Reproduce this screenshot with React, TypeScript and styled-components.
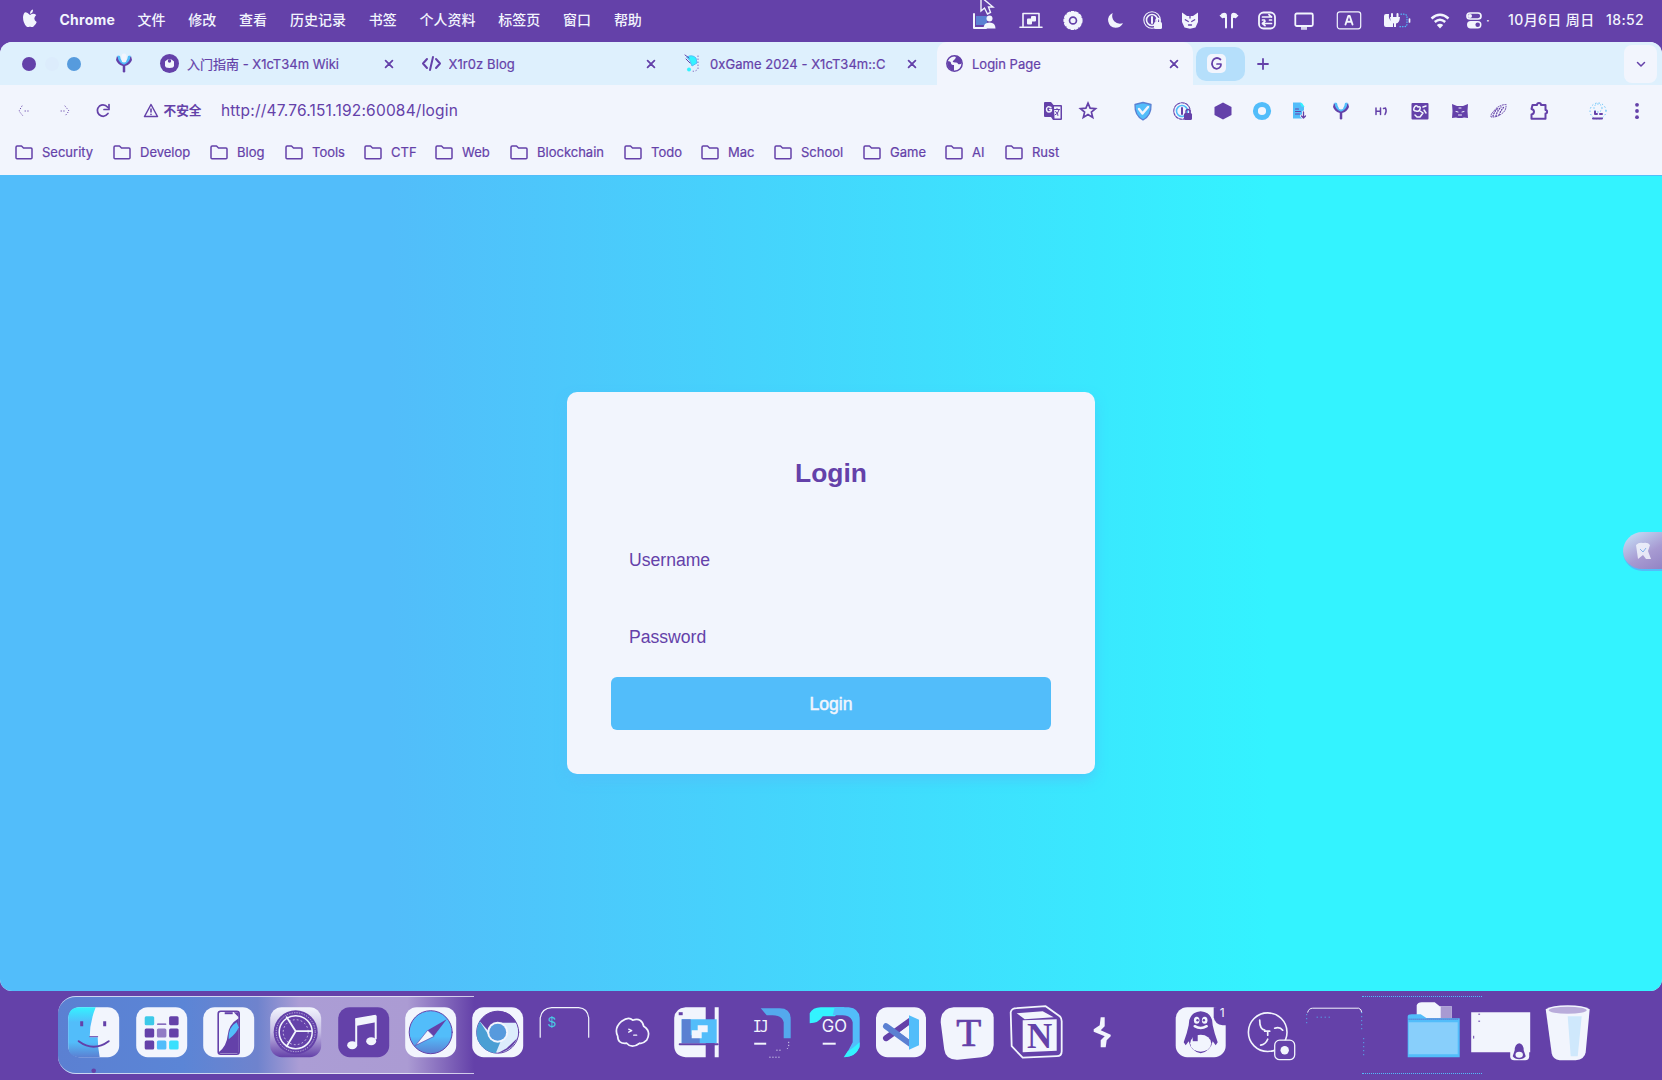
import React from "react";
import styled, { createGlobalStyle } from "styled-components";

const P = "#6441a9";
const W = "#f2f5fd";
const B = "#52bdfa";
const C = "#33f3ff";
const M = "#5b80d2";
const SANS = `Inter, "Noto Sans CJK SC", sans-serif`;

const Global = createGlobalStyle`
  *{box-sizing:border-box}
  body{margin:0;background:${P};overflow:hidden}
  svg{display:block;overflow:visible}
`;
const Desktop = styled.div`
  width:1662px;height:1080px;display:flex;flex-direction:column;background:${P};
  font-family:${SANS};color:${P};
`;
const MenuBar = styled.header`
  height:42px;flex:none;display:flex;align-items:center;color:${W};position:relative;padding-bottom:3px;
`;
const Text = styled.span<{ $w?: number; $size?: number; $ls?: number; $weight?: number; $ml?: number }>`
  width:${(p) => (p.$w ? p.$w + "px" : "auto")};flex:none;white-space:nowrap;
  font-size:${(p) => p.$size ?? 13}px;letter-spacing:${(p) => p.$ls ?? 0}px;
  font-weight:${(p) => p.$weight ?? 400};margin-left:${(p) => p.$ml ?? 0}px;line-height:20px;
`;
const Icon = styled.span<{ $s?: number; $ml?: number }>`
  width:${(p) => p.$s ?? 22}px;height:${(p) => p.$s ?? 22}px;margin-left:${(p) => p.$ml ?? 0}px;
  flex:none;display:block;
`;
const Menus = styled.nav`display:flex;gap:22.8px;margin-left:22px;`;
const Status = styled.div`display:flex;align-items:center;margin-left:auto;width:689px;`;
const Cursor = styled.div`position:absolute;left:979px;top:-3px;`;

const Browser = styled.main`
  height:949px;flex:none;display:flex;flex-direction:column;border-radius:12px;overflow:hidden;background:${W};position:relative;
`;
const TabStrip = styled.div`
  height:43px;flex:none;display:flex;align-items:center;background:#def0fd;padding-left:22px;
`;
const Dots = styled.div`display:flex;align-items:center;gap:8.5px;width:148px;`;
const Dot = styled.i<{ $c: string }>`width:14px;height:14px;border-radius:50%;background:${(p) => p.$c};`;
const Tab = styled.div<{ $w: number; $active?: boolean }>`
  width:${(p) => p.$w}px;height:43px;flex:none;display:flex;align-items:center;
  background:${(p) => (p.$active ? W : "transparent")};border-radius:10px 10px 0 0;
`;
const Title = styled(Text)`overflow:hidden;-webkit-text-stroke:.2px ${P};`;
const GTab = styled.div`
  width:49px;height:34px;border-radius:10px;background:#b5dffb;display:flex;align-items:center;justify-content:center;
  margin-left:3px;padding-right:9px;flex:none;
`;
const GPlate = styled.div`background:${W};border-radius:5px;padding:2px;`;
const Chevron = styled.div`
  width:33px;height:38px;margin-left:auto;margin-right:5px;border-radius:8px;background:${W};
  display:flex;align-items:center;justify-content:center;
`;
const Toolbar = styled.div`height:52px;flex:none;display:flex;align-items:center;padding-left:14px;`;
const ToolIcons = styled.div`display:flex;align-items:center;margin-left:auto;width:620px;`;
const Bookmarks = styled.div`height:38px;flex:none;display:flex;align-items:flex-start;padding:5px 0 0 15px;`;
const Bookmark = styled.div<{ $w: number }>`
  width:${(p) => p.$w}px;flex:none;display:flex;align-items:center;gap:9px;-webkit-text-stroke:.2px ${P};
`;

const Page = styled.section`
  flex:1;background:linear-gradient(90deg,${B} 0,${B} 390px,${C} 1270px);
  border-top:1px solid ${B};display:flex;justify-content:center;position:relative;
`;
const Card = styled.form`
  width:528px;height:382px;margin-top:216px;background:${W};border-radius:10px;padding:64px 44px 44px;
  box-shadow:0 6px 14px -2px rgba(82,189,250,.8);font-family:"Liberation Sans",Arial,sans-serif;
  display:flex;flex-direction:column;
`;
const Heading = styled.h2`margin:0 0 41px;font-size:26.4px;line-height:34px;text-align:center;font-weight:700;`;
const Field = styled.input`
  height:58px;margin:0 0 19.5px;padding:0 18px;border:0;background:transparent;outline:0;
  font:17.6px "Liberation Sans",Arial,sans-serif;color:${P};
  &::placeholder{color:${P};opacity:1}
`;
const Submit = styled.button`
  height:53px;flex:none;margin-top:-9.5px;padding-top:3px;border:0;border-radius:6px;background:${B};color:${W};
  font:17.6px "Liberation Sans",Arial,sans-serif;-webkit-text-stroke:.5px ${W};
`;
const Floating = styled.div`
  position:absolute;right:0;top:356px;width:39px;height:39px;border-radius:20px 0 0 20px;
  background:linear-gradient(150deg,#c9e7fb,#a79ad2 60%,#9384c4);border-bottom:2px solid ${B};
  display:flex;align-items:center;justify-content:center;
`;

const Dock = styled.footer`flex:1;display:flex;padding:5px 0 7px 58px;position:relative;`;
const DockGlass = styled.div`
  position:absolute;left:58px;top:5px;width:416px;height:78px;border-radius:18px 0 0 18px;
  background:linear-gradient(90deg,#5b80d2 0,#5b85d6 30%,#6f83cd 48%,#ab9dd5 58%,#ab9bd3 84%,${P} 100%);
  &::before{content:"";position:absolute;inset:0;border-radius:18px 0 0 18px;border-top:1px solid ${W};border-bottom:1px solid ${W};opacity:.75;}
`;
const DockEdge = styled.div`
  position:absolute;left:1362px;top:5px;width:120px;height:78px;
  border-top:1px dotted ${B};border-bottom:1px dotted ${B};
`;
const Apps = styled.div`display:flex;position:relative;margin-left:2.4px;`;
const App1 = styled.div`width:67.3px;height:77px;flex:none;`;
const Spacer = styled.div<{ $w: number }>`width:${(p) => p.$w}px;flex:none;`;

type SvgProps = { s?: number; v?: string; children: React.ReactNode };
const G = ({ s = 22, v = "0 0 22 22", children }: SvgProps) => (
  <svg width={s} height={s} viewBox={v} fill="none" stroke="currentColor" strokeWidth="1.6" strokeLinecap="round" strokeLinejoin="round">
    {children}
  </svg>
);
const fill = { fill: "currentColor", stroke: "none" };

const Folder = () => (
  <svg width="18" height="15" viewBox="0 0 18 15" fill="none" stroke={P} strokeWidth="1.5" strokeLinejoin="round">
    <path d="M1 12.7V2.2Q1 1 2.2 1H6.5L8.5 3H16Q17 3 17 4V12.7Q17 13.7 16 13.7H2Q1 13.7 1 12.7Z" />
  </svg>
);
const Close = () => <G s={10} v="0 0 10 10"><path d="M1.6 1.6l6.8 6.8M8.4 1.6l-6.8 6.8" strokeWidth="1.8" /></G>;
const Vee = ({ s = 18 }: { s?: number }) => (
  <G s={s} v={s === 18 ? "0 0 18 18" : "-2 -2 22 22"}>
    <path d="M2 1L1 5Q3 10 8 11L9 17L10 11Q15 10 17 5L16 1L12 6L9 9L6 6Z" {...fill} />
    <path d="M2 1L6 6L9 8.500L12 6L16 1L14.500 0.500Q15 5 9 6.500Q3 5 3.500 .5Z" fill={B} stroke="none" />
    <path d="M4 2Q4 6 9 8.500Q14 6 14 2" stroke={B} strokeWidth="2.500" />
    <path d="M9 1V5" stroke={W} strokeWidth="5" />
    <path d="M9 11V16.300" strokeWidth="2.500" />
  </G>
);
const OnePass = ({ ring }: { ring?: string }) => (
  <G>
    <circle cx="10" cy="11" r="8.2" strokeWidth="1.1" strokeDasharray={ring ? "3 1.2" : undefined} />
    <circle cx="10" cy="11" r="5.5" stroke={ring || "currentColor"} strokeWidth="1.6" />
    <path d="M10 8v6" strokeWidth="2" />
    <rect x="12" y="13" width="8" height="7" rx="1.500" {...fill} />
    <path d="M14 13.500v-2a2 2 0 0 1 4 0v2" strokeWidth="1.400" />
  </G>
);

const STATUS: [number, React.ReactNode][] = [
  [0, <G><path d="M1 5v14h12" strokeWidth="2" /><rect x="3" y="7" width="11" height="9" fill={M} stroke="none" /><circle cx="16.5" cy="9.5" r="3" {...fill} /><path d="M10.5 19.5q0-6 6-6t6 6z" {...fill} /></G>],
  [25, <G><path d="M3 17V4.5h16V17M0 18.2h22" /><path d="M7 14.500v-4q0-1 1-1h3V8q0-1 1-1h3q1 0 1 1v3.500q0 1-1 1h-3V14.500q0 1-1 1H8q-1 0-1-1z" {...fill} /></G>],
  [20, <G><circle cx="11" cy="11.5" r="6.6" strokeWidth="4.6" /><circle cx="11" cy="11.5" r="2.600" {...fill} /><circle cx="11" cy="11.5" r="8.8" strokeDasharray="2.4 2" /></G>],
  [20, <G><path d="M8.7 4Q3.5 6.3 4.2 12.3Q5.5 18.7 11.5 18.8Q16.5 18.8 19 14.2Q13.5 15.7 10.2 12.2Q7 8.5 8.7 4Z" {...fill} /></G>],
  [16, <OnePass />],
  [14.5, <G><path d="M3 3.5L8 7h6l5-3.5V13l-2.5 5.5-5.5 1.2-5.5-1.2L3 13z" {...fill} /><path d="M6.3 10.8l3 1.7M15.7 10.8l-3 1.7M11 9V5M9.5 16h3" stroke={P} strokeWidth="1.3" /></G>],
  [17.5, <G><path d="M3 5q5-3 6 1 0 3-3 3-3 0-3-4zM19 5q-5-3-6 1 0 3 3 3 3 0 3-4z" {...fill} /><path d="M8 8v10.5M14 8v10.5" strokeWidth="2" /><path d="M2.5 6.5l2 2M19.500 6.500l-2 2" /></G>],
  [16, <G><rect x="3" y="3.500" width="16" height="16" rx="4.500" strokeWidth="1.800" /><path d="M6.500 8h9M13 5.700L15.500 8M6.500 14.500h9M9 12.200L6.500 14.500 9 16.700M6.500 11h2M13.500 11h2" strokeWidth="1.700" /></G>],
  [15, <G><rect x="2.300" y="4.500" width="17.500" height="12.500" rx="1.500" strokeWidth="1.800" /><path d="M9 18v2.200M11 18v2.200M13 18v2.200" /></G>],
  [23, <G><rect x="-.7" y="2.800" width="23.400" height="17" rx="2.500" strokeWidth="1.200" /><path d="M7.500 15.500L10.300 7h1.400l2.800 8.500M8.500 12.700h5" strokeWidth="1.900" /></G>],
  [25, <G><path d="M-1 7q0-2 2-2h3q-1 6 4 8v5H1q-2 0-2-2z" {...fill} /><path d="M7 5v4M12.500 5v4" strokeWidth="2" /><path d="M5 8h10q-.5 6-4 6.500V18H9v-3.500Q5.500 14 5 8z" {...fill} /><path d="M16 5.200h3q3 0 3 3v6.500q0 3-3 3h-5" stroke={B} strokeDasharray=".5 2" strokeWidth="1.200" /><path d="M24.500 10v3" strokeWidth="1.700" /></G>],
  [22, <G><path d="M2.500 9.500Q11 2 19.500 9.500M5.800 13Q11 8.500 16.200 13" strokeWidth="2.500" strokeLinecap="butt" /><path d="M11 19.500L7.800 16q3.200-2.600 6.400 0z" {...fill} /></G>],
  [12, <G><rect x="4" y="4" width="14" height="6" rx="3" strokeWidth="1.700" /><circle cx="7" cy="7" r="2" {...fill} /><rect x="4" y="12" width="14.500" height="7.500" rx="3.700" {...fill} /><circle cx="14.700" cy="15.700" r="2.300" fill={P} stroke="none" /></G>],
];

const TOOLS: [number, React.ReactNode][] = [
  [0, <G><path d="M2 3q0-1 1-1h6l2.500 3H19q1 0 1 1v13q0 1-1 1h-8l-2-3H3q-1 0-1-1z" {...fill} /><path d="M12 6.500h6.500v12H12.500z" fill={W} stroke="none" /><path d="M9 7.500Q5 5.500 4.500 9q0 3 2.500 3t2.500-2.500H7.500" stroke={W} strokeWidth="1.400" /><path d="M12.500 9.500h5M15 8.500v1M13.500 11.500q3 1 2.500 4M17 10q-1 4-4 5" strokeWidth="1" /></G>],
  [13, <G><path d="M11 3.200l2.100 5 5.400.4-4.100 3.500 1.300 5.300L11 14.500l-4.700 2.900 1.300-5.300-4.100-3.500 5.400-.4z" strokeWidth="1.700" strokeLinejoin="miter" /></G>],
  [33, <G><path d="M3 4.500L11 2.500l8 2q.5 11-8 15.500-8.500-4.500-8-15.500z" fill={B} strokeWidth="1.300" stroke={M} /><path d="M7 9l3.500 4.500L16 7" stroke={W} strokeWidth="2.500" /></G>],
  [18, <OnePass ring={B} />],
  [17.5, <G><path d="M11 2.500l8.500 4.500v8L11 19.500 2.500 15V7z" {...fill} /></G>],
  [17.5, <G><circle cx="11" cy="11" r="6.600" stroke={B} strokeWidth="5" /></G>],
  [16, <G><path d="M4 2.500h8l3 4v12H4z" fill={B} stroke="none" /><path d="M11 3h2l2.500 4-3-.5z" fill={C} stroke="none" /><path d="M6.500 9h3M6.500 11.500h5M6.500 14h4" strokeWidth="1.200" /><path d="M14.500 12v6M12.500 16l2 2 2-2" stroke={W} strokeWidth="3" /><path d="M14.500 12v6M12.500 16l2 2 2-2" strokeWidth="1.300" /></G>],
  [19, <Vee s={22} />],
  [17.5, <G><path d="M6 8v6.500M10.500 8v6.500M6 11.300h4.500M13.500 8.500l2-.5M15.500 8q1.500 3-.5 6.500" strokeWidth="1.500" /></G>],
  [17.5, <G><rect x="2.500" y="3" width="17" height="16.500" rx="1" {...fill} /><path d="M5 8q2-4 4-1 3-1 2 2-1 3-4 2-3 0-2-3zM6 15l2 2h3l3-4-3-2M14 7l3-1M15 10l2 3" stroke={W} strokeWidth="1.500" /></G>],
  [18, <G><path d="M3 4l5 2h6l5-2-.5 7 .5 7-4-.5-2 .5h-4l-2-.5L3 18l.5-7z" {...fill} /><path d="M7 11.500l2 .5M15 11.500l-2 .5M9.500 15h3M10 8h2" stroke={W} strokeWidth="1" /></G>],
  [17, <G><path d="M3 17q-.5-3 3-6 4-6 12-6.500.5 6-4 9-5 4-11 3.500z" strokeDasharray="1 1.500" strokeWidth="1" /><path d="M5 16q1-4 5-8M8 16q1-5 5-9M11 15q2-5 5-8" strokeDasharray=".8 1.800" strokeWidth="1.300" /></G>],
  [18, <G><path d="M4.500 5H9q0-2 2-2t2 2h4.500v5q1.600 0 1.600 1.800t-1.600 1.700v5.300h-14v-4.300q2.500-.5 2.500-2.700T3.500 9z" strokeWidth="2" /></G>],
  [37, <G><circle cx="11" cy="11" r="8" stroke={B} strokeWidth="1" strokeDasharray=".5 3" /><circle cx="11" cy="8" r="4" stroke={B} strokeWidth="1" strokeDasharray=".5 2.500" /><path d="M8 11.500v2.500h2M13 14h2M6 18.500h9" strokeWidth="2" /></G>],
  [17, <G><circle cx="11" cy="4.800" r="1.900" {...fill} /><circle cx="11" cy="11" r="1.900" {...fill} /><circle cx="11" cy="17.200" r="1.900" {...fill} /></G>],
];

const BOOKS: [string, number][] = [["Security", 98], ["Develop", 97], ["Blog", 75], ["Tools", 79], ["CTF", 71], ["Web", 75], ["Blockchain", 114], ["Todo", 77], ["Mac", 73], ["School", 89], ["Game", 82], ["AI", 60], ["Rust", 60]];

/* Dock drawings share one coordinate system whose origin is the centre of the icon. */
const Art = ({ children, dx = 0 }: { children: React.ReactNode; dx?: number }) => (
  <App1><svg width="67.3" height="77" viewBox={`${-33.7 - dx} -36.2 67.3 77`} fill="none" stroke="none" strokeLinecap="round" strokeLinejoin="round">{children}</svg></App1>
);
const Tile = ({ c = W, w = 51 }: { c?: string; w?: number }) => <rect x={-w / 2} y="-25" width={w} height="50" rx="11.500" fill={c} />;
const Penguin = () => (
  <g>
    <path d="M0-21Q-12-20-12-7L-14 1-17 10-15 13-12 9Q-10 19 0 21 10 19 12 9L15 13 17 10 14 1 12-7Q12-20 0-21Z" fill={P} />
    <ellipse cx="0" cy="11" rx="10.500" ry="8.500" fill={W} />
    <path d="M-8 2h5v7h-5z" fill={P} />
    <ellipse cx="-4" cy="-12" rx="2.800" ry="3.500" fill={W} /><ellipse cx="4" cy="-12" rx="2.800" ry="3.500" fill={W} />
    <circle cx="-3.200" cy="-12" r="1.200" fill={P} /><circle cx="3.200" cy="-12" r="1.200" fill={P} />
    <path d="M-6-6Q0-2.500 6-6" stroke={W} strokeWidth="2.500" />
  </g>
);

const Finder = () => (
  <Art>
    <defs><linearGradient id="fd" x1="0" y1="0" x2="0" y2="1"><stop offset="0" stopColor={C} /><stop offset=".3" stopColor={B} /><stop offset=".7" stopColor={B} /><stop offset="1" stopColor={M} /></linearGradient></defs>
    <Tile /><path d="M2-25H-14Q-25.500-25-25.500-13V13Q-25.500 25-14 25H6Q4 15 4 5H-4Q-4-10 2-25Z" fill="url(#fd)" />
    <path d="M-12-11v5M11-11v5" stroke={P} strokeWidth="3" strokeLinecap="butt" /><path d="M-15 9Q0 20 15 9" stroke={P} strokeWidth="2" /><path d="M-4 4.500H4" stroke={P} />
    <circle cx="0" cy="38.500" r="2.300" fill={P} />
  </Art>
);
const Launchpad = () => (
  <Art><Tile />
    {[0, 1, 2].map((r) => [0, 1, 2].map((c) => {
      const cols = [["#3cc9e9", W, P], [P, "#917cc5", P], [P, B, "#39e0fd"]];
      return <rect key={r + "-" + c} x={-17 + c * 12.200} y={-16 + r * 12.200} width="9.500" height="9" rx="1.500" fill={cols[r][c]} />;
    }))}
    <path d="M-4-8h8" stroke={P} strokeWidth="1.300" />
  </Art>
);
const Phone = () => (
  <Art><Tile /><rect x="-10.500" y="-21" width="21" height="43" rx="2.500" fill={W} stroke={P} strokeWidth="1.600" />
    <path d="M10-14Q0-8-1 3T-10 20q0 1 2 1H10z" fill={P} /><path d="M8-10Q-1-5 0 7 8 1 10-5z" fill={B} /><path d="M-4-20h8v2h-8z" fill={P} /><path d="M5-20h5v5z" fill={P} /></Art>
);
const Settings = () => (
  <Art>
    <defs><linearGradient id="st" x1="0" y1="0" x2="0" y2="1"><stop offset="0" stopColor={W} /><stop offset=".5" stopColor="#c4bbe4" /><stop offset="1" stopColor={P} /></linearGradient></defs>
    <Tile c="url(#st)" /><circle r="22" fill={P} /><circle r="16.500" stroke={W} strokeWidth="1.500" /><circle r="19.500" stroke={W} strokeWidth=".6" strokeDasharray=".5 2" />
    <path d="M0-1L-9-15M0-1H16M0-1L-9 14" stroke={W} strokeWidth="1.800" /><circle r="12.500" stroke={W} strokeWidth=".7" strokeDasharray="1 3" /></Art>
);
const Music = () => (
  <Art><Tile c={P} /><path d="M-8-12L12-16V7" stroke={W} strokeWidth="2" strokeLinecap="butt" /><path d="M-8.500-14L12-17.500V-10L-6.500-6.500V13H-8.500Z" fill={W} /><ellipse cx="-11.500" cy="13" rx="5" ry="4" fill={W} /><ellipse cx="7.500" cy="9" rx="5" ry="4" fill={W} /></Art>
);
const Safari = () => (
  <Art>
    <defs><linearGradient id="sf" x1="0" y1="0" x2="0" y2="1"><stop offset=".6" stopColor={B} /><stop offset="1" stopColor={M} /></linearGradient></defs>
    <Tile /><circle r="21.500" fill="url(#sf)" stroke={P} strokeWidth="1" /><path d="M16-13L3 4-3-2Z" fill={P} /><path d="M-15 13L-3-2 3 4Z" fill={W} stroke={P} strokeWidth=".6" /></Art>
);
const ChromeIcon = () => (
  <Art><Tile /><circle r="21" fill="#dcedfc" stroke={P} strokeWidth="1" /><path d="M-18-11Q-10-22 3-21 14-20 18.500-9.500H0Q-8-9-9-1Z" fill={P} /><path d="M-18-11L-9 3Q-5 10 3 9L-2 21Q-14 20-20 8-23-2-18-11Z" fill="#4a9fd4" /><path d="M19.500 6Q14 19 0 21L9 16Z" fill={P} /><circle r="10.500" fill={W} /><circle r="8.500" fill="#579add" /></Art>
);
const Term = () => (
  <Art><path d="M-24.500 5V-14Q-23-24-13-24.500H14Q23-24 24-14V5" stroke={W} strokeWidth="1.200" /><text x="-17" y="-5" fontFamily="Liberation Mono, monospace" fontSize="14" fill="#48cbe5">$</text></Art>
);
const Cloud = () => (
  <Art><path d="M-11-11Q-4-16 0-12 9-15 11-6 19-1 14 8 10 12 7 11-1 17-6 11-15 12-15 4-19-4-11-11Z" stroke={W} strokeWidth="1.700" /><path d="M-4-3l3 1.500-3 1.500M1 3h3" stroke={W} strokeWidth="1.300" /></Art>
);
const Machine = () => (
  <Art><path d="M-14-25H6V25H-14Q-25.500 24-25.500 13V-13Q-25.500-24-14-25ZM15-25h4v50h-4z" fill={W} /><path d="M-21-20h4v3h-4z" fill={P} /><path d="M-18-13H17V11H-18z" fill={B} /><path d="M-18-13H-9V3H0V11H-18z" fill={M} /><path d="M-8 6V-2H-2V-7H8V0H2V6z" fill={W} /><path d="M-20 12H18" stroke={P} strokeWidth="2" /></Art>
);
const Idea = () => (
  <Art><path d="M-6-24H13Q24-24 24-13V6H17V-10Q15-17 6-17H0z" fill="#54a9ed" /><text x="-14" y="0" fontFamily="DejaVu Sans Mono, monospace" fontSize="15" fill={W} textLength="16">IJ</text><path d="M-12.500 11.500h12" stroke={W} strokeWidth="2" strokeLinecap="butt" /><path d="M22 10v4M21 16l-2 2M10 18h5M3 25h11" stroke={W} strokeWidth=".8" strokeDasharray=".5 2.500" /></Art>
);
const Go = () => (
  <Art><path d="M-25-9V-19Q-22-25-14-25H10L0-16H-12Q-16-9-25-9Z" fill={C} /><path d="M0-25H14Q25-24 25-13V15Q20 25 10 25L18 10V-10Q16-17 8-17H-2z" fill={B} /><path d="M25 10Q25 24 9 25L13 19 19 15z" fill={C} /><text x="-13" y="0" fontFamily="Inter, sans-serif" fontSize="16.700" fill={W}>GO</text><path d="M-12 11.500H1" stroke={W} strokeWidth="2" strokeLinecap="butt" /></Art>
);
const Code = () => (
  <Art dx={-0.7}><Tile w={50} /><path d="M-15 6L10-12" stroke={P} strokeWidth="6" /><path d="M-15-6L10 12" stroke={M} strokeWidth="6" /><path d="M8-17L18-12.500V13L8 17.500z" fill={B} /><path d="M8-7V7L-1 0z" fill={W} /></Art>
);
const Typora = () => (
  <Art dx={-1}><path d="M-14-25H15Q26-24 26-14V13Q25 24 14 25L-10 27.500Q-22 28-23.500 17L-27-10Q-27-24-14-25Z" fill={W} /><text x="1" y="13.500" fontFamily="Liberation Serif, serif" fontSize="41" textAnchor="middle" fill={P} stroke={P} strokeWidth=".7">T</text></Art>
);
const Notion = () => (
  <Art dx={-1}><path d="M-25-20Q-24-24-19-24L10-26 24-16Q26-14 26-11V19Q26 24 21 24L-13 25.500-24 14z" stroke={W} strokeWidth="1.800" /><path d="M-19-19L7-21 18-15-11-13z" fill={W} /><path d="M-13-12L21-13V18.500L-13 20z" fill={W} /><text x="4" y="15.500" fontFamily="Liberation Serif, serif" fontWeight="700" fontSize="35" textAnchor="middle" fill={P}>N</text></Art>
);
const Bolt = () => <Art dx={-2}><path d="M-1-15H3V-6L-1-2 9 2.500 9 4 5 8 4 15H-1V8L3 4 -8-.5-8-3-2-7z" fill={W} /></Art>;
const QQ = () => (
  <Art><Tile w={50} /><Penguin /><path d="M13-25V-15Q14-8 22-7H27V-26z" fill={P} /><text x="19" y="-15" fontFamily="Inter, sans-serif" fontSize="12" fill={W}>1</text></Art>
);
const Obs = () => (
  <Art><circle r="19.300" stroke={W} strokeWidth="1.600" /><path d="M-8-12Q-8-3-3-2M7-4Q12-6 15-2M0 7Q-2 12-7 13M-3-1h5M0 0v3" stroke={W} strokeWidth="1.700" /><rect x="7" y="8" width="20" height="19.500" rx="5" fill={P} stroke={W} strokeWidth="1.300" /><circle cx="17" cy="18" r="4.200" fill={W} /></Art>
);
const Shade = () => (
  <Art><path d="M-27-20Q-26-24-22-24H24Q27-23 27-20" stroke={W} strokeWidth="1" /><path d="M-28-18V-6M27-20V0M29 6V24M-18-15h14" stroke={B} strokeWidth="1" strokeDasharray="1 3" strokeLinecap="butt" /></Art>
);
const Files = () => (
  <Art><path d="M-17-14V-27Q-16-30-12-30H1L6-26H18V-14z" fill={W} /><path d="M7-26H18V-14H7z" fill="#a89ad2" /><path d="M-26-16Q-26-18-22-18H-13L-7-14H26V25H-26z" fill={B} /><path d="M-25-10H24V22H-25z" fill="#88cffb" /><path d="M-25-13H25" stroke={M} strokeDasharray="1 1" /></Art>
);
const Win = () => (
  <Art><path d="M-29.500-20h59v40h-59z" fill={W} /><path d="M-22-18h1M-22-11h1M-27 4v2" stroke={P} /><rect x="9.500" y="8" width="19" height="20" rx="4" fill={W} /><path d="M18.500 11Q14 12 14 18L12 24Q14 27 18.500 27T25 24L23 18Q23 12 18.500 11Z" fill={P} /><ellipse cx="18.500" cy="22.500" rx="3.700" ry="3" fill={W} /></Art>
);
const Trash = () => (
  <Art><path d="M-22-23Q-16-27 0-27T22-23L18 20Q17 27 8 28H-8Q-15 27-16 21z" fill={W} /><ellipse cy="-22" rx="19" ry="3.500" fill="#b9acdb" /><path d="M0-16H14L10 24H3Z" fill="#cfe8fc" /></Art>
);

export default function App() {
  return (
    <Desktop>
      <Global />
      <MenuBar>
        <Icon $ml={20}><G s={20} v="0 0 20 20"><path d="M10 6Q4-.5 3 8q0 6 3.500 9.500 1.500 1 3.500 0 2 1 3.500 0Q16 15.500 16.700 13q-4.500-3-.5-7Q13.500 3.500 10 6ZM10 5q0-4 3-4.500.3 3.500-3 4.500z" {...fill} /></G></Icon>
        <Text $ml={17.5} $w={56} $size={14} $weight={700} $ls={0.25}>Chrome</Text>
        <Menus>
          {["文件", "修改", "查看", "历史记录", "书签", "个人资料", "标签页", "窗口", "帮助"].map((m) => <Text key={m} $size={14} $weight={500}>{m}</Text>)}
        </Menus>
        <Status>
          {STATUS.map(([ml, node], i) => <Icon key={i} $ml={ml}>{node}</Icon>)}
          <Text $ml={1} $w={22}>·</Text>
          <Text $w={98} $size={14} $ls={0.4} $weight={500}>10月6日 周日</Text>
          <Text $size={14} $ls={0.4} $weight={500}>18:52</Text>
        </Status>
        <Cursor><svg width="16" height="20" viewBox="0 0 16 20"><path d="M2 0v14l3.500-3 3 6 3-1.500-2-5.500H14z" fill={P} stroke={W} strokeWidth="1.400" /></svg></Cursor>
      </MenuBar>
      <Browser>
        <TabStrip>
          <Dots><Dot $c={P} /><Dot $c="#dcecfc" /><Dot $c="#569bdd" /><Icon $s={18} $ml={25}><Vee /></Icon></Dots>
          <Tab $w={251}>
            <Icon $s={19} $ml={-10}><G s={19} v="0 0 19 19"><circle cx="9.500" cy="9.500" r="9.500" {...fill} /><path d="M5 7.500L7.500 5.500h4L14 7.500v4q0 2.500-4.500 2.500T5 11.500z" fill={W} stroke="none" /><circle cx="9.500" cy="7" r="1.700" {...fill} /></G></Icon>
            <Title $ml={8} $w={197}>入门指南 - X1cT34m Wiki</Title><Close />
          </Tab>
          <Tab $w={261}>
            <Icon $s={19} $ml={1}><G s={19} v="0 0 19 19"><path d="M5 5L1 9.500 5 14M14 5l4 4.500L14 14M11 3L8 16" strokeWidth="2" /></G></Icon>
            <Title $ml={7.5} $w={197.5} $ls={0.08}>X1r0z Blog</Title><Close />
          </Tab>
          <Tab $w={255}>
            <Icon $s={19} $ml={1}><G s={19} v="0 0 19 19"><path d="M4 3q5-3 9 1l1 5-5 3-2-5z" fill={C} stroke={B} strokeWidth="1" /><path d="M2 1l4 3M3 5l4 4" strokeWidth="1" /><circle cx="6" cy="15.500" r="2" fill={C} stroke="none" /><path d="M15 2v13q-3 3-6 2" strokeWidth=".8" strokeDasharray=".5 2.500" /></G></Icon>
            <Title $ml={8} $w={197} $ls={0.05}>0xGame 2024 - X1cT34m::C</Title><Close />
          </Tab>
          <Tab $w={256} $active>
            <Icon $s={17} $ml={9}><G s={17} v="0 0 17 17"><circle cx="8.500" cy="8.500" r="7.700" strokeWidth="1.500" /><path d="M1 6q4 0 4 2t3 2v6Q1 15 1 6zM8 1q3 1 1 3L7 6Q6 7 9 7.500q3-.5 3 1.500 2 1 4-1Q16 1 8 1z" {...fill} /></G></Icon>
            <Title $ml={9} $w={197}>Login Page</Title><Close />
          </Tab>
          <GTab><GPlate><G s={15} v="0 0 15 15"><path d="M11.500 3.500Q8 .5 4.500 3.500 1.500 7.500 4.500 11.500q4 3 7-1 .5-1.200.5-2.500H8" strokeWidth="1.700" /></G></GPlate></GTab>
          <Icon $s={12} $ml={12}><G s={12} v="0 0 12 12"><path d="M6 1v10M1 6h10" strokeWidth="1.800" /></G></Icon>
          <Chevron><G s={10} v="0 0 10 10"><path d="M1.500 3.500L5 7l3.500-3.500" strokeWidth="1.500" /></G></Chevron>
        </TabStrip>
        <Toolbar>
          <Icon><G><path d="M8 6L5 11l4 5M11 11h5" strokeWidth=".9" strokeDasharray=".5 2.200" /></G></Icon>
          <Icon $ml={19}><G><path d="M6 11h4M10 6l4 5-4 5" strokeWidth=".9" strokeDasharray=".5 2.200" /></G></Icon>
          <Icon $ml={15}><G><path d="M16 7.500Q12 3 7.500 6q-4 4-.5 8.500 5 4 9-1" strokeWidth="1.700" /><path d="M17 4.500v5h-5" strokeWidth="1.700" /></G></Icon>
          <Icon $ml={25.500}><G><path d="M11 4.500L4.500 16.500h13z" strokeWidth="1.500" /><path d="M11 9v3M11 14.200v.3" /></G></Icon>
          <Text $ml={2} $w={57.5} $weight={700} $size={12.7}>不安全</Text>
          <Text $size={15.5} $ls={0.2}>http://47.76.151.192:60084/login</Text>
          <ToolIcons>{TOOLS.map(([ml, node], i) => <Icon key={i} $ml={ml}>{node}</Icon>)}</ToolIcons>
        </Toolbar>
        <Bookmarks>
          {BOOKS.map(([t, w]) => <Bookmark key={t} $w={w}><Folder /><Text>{t}</Text></Bookmark>)}
        </Bookmarks>
        <Page>
          <Card onSubmit={(e) => e.preventDefault()}>
            <Heading>Login</Heading>
            <Field placeholder="Username" />
            <Field placeholder="Password" />
            <Submit>Login</Submit>
          </Card>
          <Floating><svg width="20" height="20" viewBox="0 0 20 20" fill={W} opacity=".85"><path d="M3 4q3-3 7-2 5-1 7 2l-2 6 3 8h-5l-3-4-5 4q-1-7-2-14z" /><path d="M7 8l3 3 3-4" stroke="#7cb5ee" fill="none" /></svg></Floating>
        </Page>
      </Browser>
      <Dock>
        <DockGlass /><DockEdge />
        <Apps>
          <Finder /><Launchpad /><Phone /><Settings /><Music /><Safari /><ChromeIcon /><Term /><Cloud /><Machine /><Idea /><Go /><Code /><Typora /><Notion /><Bolt />
          <Spacer $w={29.5} /><QQ /><Obs /><Shade /><Spacer $w={31} /><Files /><Win /><Trash />
        </Apps>
      </Dock>
    </Desktop>
  );
}
